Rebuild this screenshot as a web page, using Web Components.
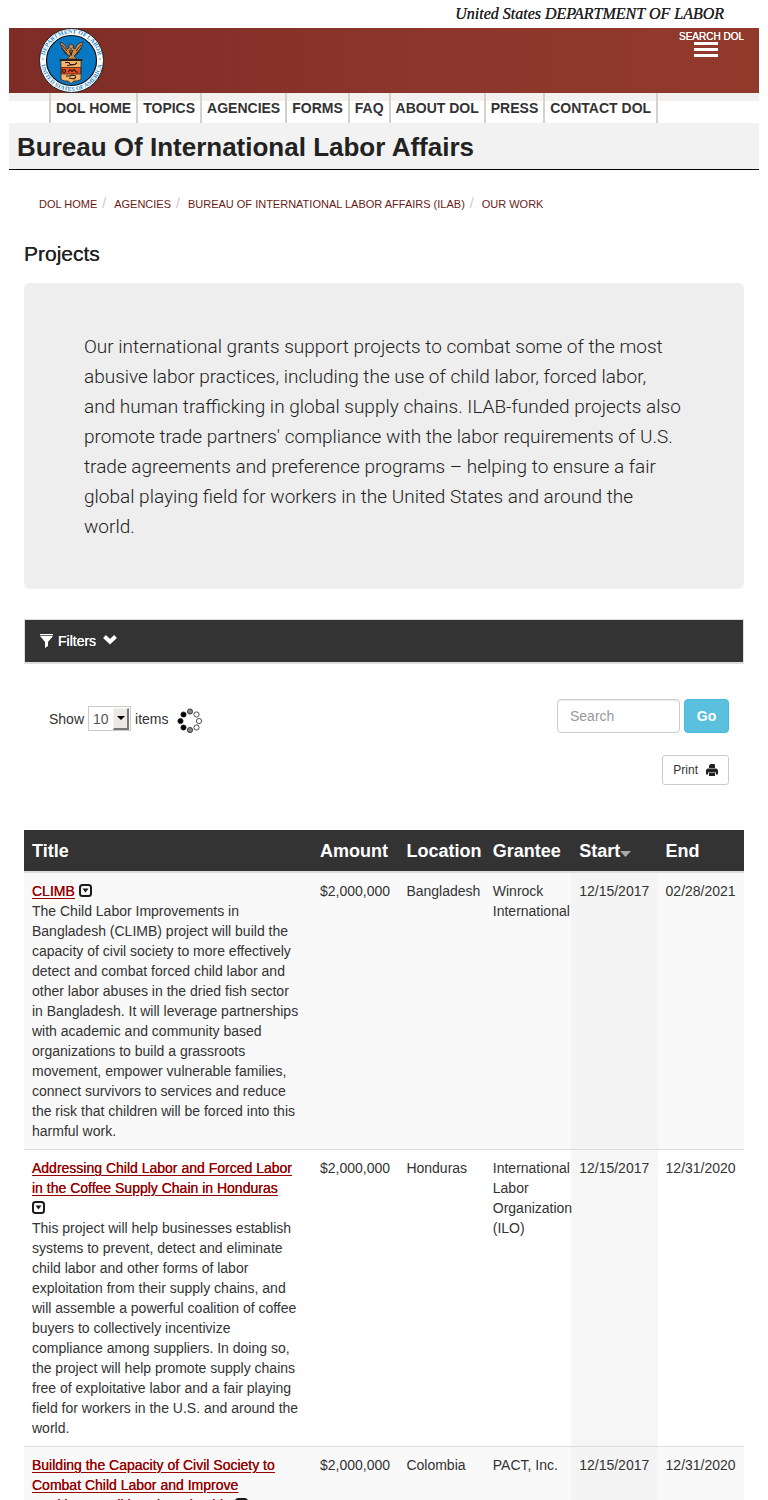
<!DOCTYPE html>
<html lang="en">
<head>
<meta charset="utf-8">
<meta name="viewport" content="width=device-width, initial-scale=1">
<title>Projects | Bureau of International Labor Affairs</title>
<style>
body { margin: 0; background: #fff; color: #333; font: 14px/20px "Liberation Sans", Arial, sans-serif; }
</style>
</head>
<body>
<dol-page>
  <dol-masthead slot="top"><span slot="agency">United States DEPARTMENT OF LABOR</span></dol-masthead>
  <dol-nav slot="top"></dol-nav>
  <bureau-title slot="top">Bureau Of International Labor Affairs</bureau-title>
  <crumb-trail></crumb-trail>
  <page-title>Projects</page-title>
  <lead-box>Our international grants support projects to combat some of the most abusive labor practices, including the use of child labor, forced labor, and&nbsp;human trafficking in global supply chains. ILAB-funded projects also promote trade partners' compliance with the labor requirements of U.S. trade agreements and preference programs – helping to ensure a fair global playing field for workers in the United States and around the world.</lead-box>
  <filter-bar>Filters</filter-bar>
  <list-controls></list-controls>
  <project-table></project-table>
</dol-page>

<script>
function define(name, html, setup) {
  const template = document.createElement('template');
  template.innerHTML = html;
  customElements.define(name, class extends HTMLElement {
    constructor() {
      super();
      const root = this.attachShadow({ mode: 'open' });
      root.append(template.content.cloneNode(true));
      if (setup) setup(root);
    }
  });
}

define('dol-page', `
<style>
:host { display: block; padding: 0 9px; }
main { padding: 0 15px; }
</style>
<header><slot name="top"></slot></header>
<main><slot></slot></main>`);

define('dol-seal', `
<style>:host { display: block; width: 65px; height: 65px; } svg { display: block; }</style>
<svg viewBox="0 0 65 65" width="65" height="65" role="img" aria-label="Department of Labor seal">
  <defs>
    <path id="upper" d="M5.500 32.500A27 27 0 0 1 59.500 32.500"/>
    <path id="lower" d="M2 32.500A30.500 30.500 0 0 0 63 32.500"/>
  </defs>
  <circle cx="32.500" cy="32.500" r="32" fill="#fff" stroke="#222" stroke-width="1"/>
  <circle cx="32.500" cy="32.500" r="25" fill="#0878c4" stroke="#111" stroke-width="1.200"/>
  <g font-family="Liberation Serif, serif" font-size="6" font-weight="bold" fill="#2788c9">
    <text><textPath href="#upper" startOffset="50%" text-anchor="middle">DEPARTMENT OF LABOR</textPath></text>
    <text><textPath href="#lower" startOffset="50%" text-anchor="middle">UNITED STATES OF AMERICA</textPath></text>
  </g>
  <circle cx="4" cy="31" r=".8" fill="#2788c9"/><circle cx="61" cy="31" r=".8" fill="#2788c9"/>
  <g stroke="#2a180c" stroke-width=".7" stroke-linejoin="round">
    <path d="M21 14q3 1 5 3l2 4 2-1 0-3 2-1 2.500 1.500-.5 2.500 2 1 2-4q2-2 6-3-1 3-1.500 5-2 4-4.500 7l-3 2 3 3h-10l3-3-3-1.500q-4-4-5-7-1-2-2-5.500z" fill="#c98b4e"/>
    <path d="M23 17l5 6M22.500 20l5 5M24.500 24l4 3M42 17l-5 6M42.500 20l-5 5M40 24l-4 3M32 20v8M30 22l2 5 2-5" fill="none" stroke-width=".9"/>
    <path d="M22 32.500h20v19q-4 2-7 1.500l-3 2.500-3-2.500q-4 .5-7-1.500z" fill="#f4b46c"/>
    <path d="M22.300 39.500h19.400v6.500H22.300z" fill="#e8502a"/>
    <path d="M20.500 32h23" fill="none" stroke-width="1.600"/>
  </g>
  <g fill="none" stroke="#2a180c" stroke-width="1.100">
    <path d="M26 34.500h4l1 2h5l2-2M28 37.500l8-1M25 41.500a1.500 1.500 0 1 0 .1 0M29 44l2-2.500 2 2 2-2 2 2.500h2M27 48h4l2-1 4 1M30 50l5 1 2-2"/>
  </g>
</svg>`);

define('dol-masthead', `
<style>
:host { display: block; }
.agency { display: flex; justify-content: flex-end; height: 28px; padding-right: 35px; box-sizing: border-box; font: italic 16px/28px "Liberation Serif", serif; color: #222; text-shadow: 0 0 0 currentColor; }
.band { display: flex; justify-content: space-between; align-items: flex-start; height: 65px; padding: 0 15px 0 30px; background: linear-gradient(90deg, #7e2c26, #8d372c 60%, #913a2c); }
button { display: flex; flex-direction: column; align-items: center; margin: 0; padding: 3px 0 0; border: 0; background: none; color: #fff; font: 10px/11px "Liberation Sans", Arial, sans-serif; text-shadow: 0 0 0 currentColor; cursor: pointer; }
.bars { width: 24px; height: 15px; margin-right: 10px; background: repeating-linear-gradient(#fff 0 3px, transparent 3px 6px); }
</style>
<div class="agency"><slot name="agency"></slot></div>
<div class="band">
  <dol-seal></dol-seal>
  <button type="button">SEARCH DOL<span class="bars"></span></button>
</div>`);

define('dol-nav', `
<style>
:host { display: block; background: linear-gradient(#f2f1ef 0 8px, #fff 8px); }
ul { display: flex; margin: 0; padding: 0 0 0 40px; list-style: none; height: 30px; }
li { border-right: 2px solid #d4d2cb; }
li:first-child { border-left: 2px solid #d4d2cb; }
a { display: block; padding: 5px; color: #333; font-weight: bold; text-decoration: none; white-space: nowrap; }
</style>
<nav><ul>
<li><a href="#">DOL HOME</a></li><li><a href="#">TOPICS</a></li><li><a href="#">AGENCIES</a></li><li><a href="#">FORMS</a></li><li><a href="#">FAQ</a></li><li><a href="#">ABOUT DOL</a></li><li><a href="#">PRESS</a></li><li><a href="#">CONTACT DOL</a></li>
</ul></nav>`);

define('bureau-title', `
<style>
:host { display: block; background: #f2f2f2; border-bottom: 1px solid #000; }
h1 { margin: 0; padding: 9px 8px 7px; color: #222; font-size: 26px; line-height: 30px; }
</style>
<h1><slot></slot></h1>`);

define('crumb-trail', `
<style>
:host { display: block; padding: 23px 15px 0; }
ol { display: flex; flex-wrap: wrap; margin: 0; padding: 0; list-style: none; }
li + li::before { content: "/"; padding: 0 8px 0 5px; color: #ccc; }
a { color: #6b1a14; font-size: 11px; text-decoration: none; }
</style>
<nav aria-label="Breadcrumb"><ol>
<li><a href="#">DOL HOME</a></li><li><a href="#">AGENCIES</a></li><li><a href="#">BUREAU OF INTERNATIONAL LABOR AFFAIRS (ILAB)</a></li><li><a href="#">OUR WORK</a></li>
</ol></nav>`);

define('page-title', `
<style>
:host { display: block; padding: 28px 0 17px; }
h2 { margin: 0; color: #222; font-size: 21px; line-height: 24px; font-weight: normal; text-shadow: 0 0 0 currentColor; }
</style>
<h2><slot></slot></h2>`);

define('lead-box', `
<style>
:host { display: block; padding: 49px 58px 47px 60px; border-radius: 6px; background: #eee; }
p { margin: 0; color: #222; font: 300 19px/30px Roboto, "Liberation Sans", sans-serif; }
</style>
<p><slot></slot></p>`);

define('filter-bar', `
<style>
:host { display: block; margin-top: 30px; }
button { display: flex; align-items: center; gap: 5px; width: 100%; height: 45px; padding: 0 15px; border: 1px solid #ddd; border-bottom-width: 2px; background: #333; color: #fff; font: 14px/20px "Liberation Sans", Arial, sans-serif; text-shadow: 0 0 0 currentColor; cursor: pointer; }
svg { display: block; }
</style>
<button type="button" aria-expanded="false">
  <svg width="13" height="15" viewBox="0 0 13 15" fill="#fff"><path d="M0 0h13v1.300H0zM0 2h13L8 8v4l-3 2V8z"/></svg>
  <slot></slot>
  <svg width="20" height="15" viewBox="0 0 20 15"><path d="M3.500 2.500l5.500 5.300 5.500-5.300" fill="none" stroke="#fff" stroke-width="4"/></svg>
</button>`);

define('busy-spinner', `
<style>:host { display: block; } svg { display: block; }</style>
<svg width="26" height="26" viewBox="0 0 26 26" stroke="#222" stroke-width=".8">
  <circle cx="13" cy="3.500" r="2.600" fill="#888"/><circle cx="19.500" cy="6.500" r="2.600" fill="#fff"/>
  <circle cx="22" cy="13" r="2.600" fill="#fff"/><circle cx="19.500" cy="19.500" r="2.600" fill="#fff"/>
  <circle cx="13" cy="22" r="2.600" fill="#888"/><circle cx="6.500" cy="19.500" r="2.600" fill="#000"/>
  <circle cx="3.500" cy="13" r="2.600" fill="#000"/><circle cx="6.500" cy="6.500" r="2.600" fill="#000"/>
</svg>`);

define('list-controls', `
<style>
:host { display: flex; justify-content: space-between; align-items: flex-start; padding: 35px 15px 45px 25px; }
.length { display: flex; align-items: center; gap: 4px; padding-top: 4px; }
.pick { display: grid; width: 43px; height: 25px; }
.pick > * { grid-area: 1 / 1; }
select { appearance: none; margin: 0; padding: 0 0 0 4px; border: 1px solid #ccc; border-radius: 0; background: #fff; color: #555; font: inherit; }
.arrow { justify-self: end; align-self: center; display: grid; place-items: center; width: 16px; height: 22px; margin-right: 2px; box-sizing: border-box; border: 1px solid #f5f3f0; border-right: 2px solid #777; border-bottom: 2px solid #777; background: #ece9e4; pointer-events: none; }
busy-spinner { margin: 5px 0 0 5px; }
.tools { display: flex; flex-direction: column; align-items: flex-end; gap: 22px; }
form { display: flex; gap: 4px; align-items: center; }
input { box-sizing: border-box; width: 123px; height: 34px; padding: 6px 12px; border: 1px solid #ccc; border-radius: 4px; background: #fff; box-shadow: inset 0 1px 1px #00000013; font: inherit; color: #555; }
input::placeholder { color: #999; opacity: 1; }
button { display: flex; align-items: center; justify-content: center; box-sizing: border-box; margin: 0; cursor: pointer; }
.go { width: 45px; height: 34px; border: 1px solid #46b8da; border-radius: 4px; background: #5bc0de; color: #fff; font: bold 14px/20px "Liberation Sans", Arial, sans-serif; }
.print { gap: 8px; height: 30px; padding: 0 10px; border: 1px solid #ccc; border-radius: 3px; background: #fff; color: #333; font: 12px/18px "Liberation Sans", Arial, sans-serif; }
</style>
<div class="length">
  <label for="len">Show</label>
  <span class="pick"><select id="len"><option>10</option><option>25</option><option>50</option></select>
    <span class="arrow"><svg width="8" height="4" viewBox="0 0 8 4"><path d="M0 0h8L4 4z"/></svg></span></span>
  <label for="len">items</label>
  <busy-spinner></busy-spinner>
</div>
<div class="tools">
  <form onsubmit="return false"><input type="search" placeholder="Search" aria-label="Search"><button class="go" type="submit">Go</button></form>
  <button class="print" type="button">Print
    <svg width="12" height="13" viewBox="0 0 12 13" fill="#222"><path d="M3 4V1.500L4.500 0h4L9 1.500V4zM1.500 4.500h9L12 6v4.500h-2V8.500H2v2H0V6zM3 9h6v3H3z"/></svg>
  </button>
</div>`);

define('toggle-icon', `
<style>:host { display: inline-block; width: 13px; height: 13px; margin-right: 8px; vertical-align: -1px; } svg { display: block; }</style>
<svg width="13" height="13" viewBox="0 0 13 13"><rect x="1" y="1" width="11" height="11" rx="2.500" fill="none" stroke="#1c1c1c" stroke-width="2"/><path d="M3.500 4.500h6l-3 4z" fill="#1c1c1c"/></svg>`);

const projects = [
  { title: 'CLIMB', amount: '$2,000,000', place: 'Bangladesh', grantee: 'Winrock International', start: '12/15/2017', end: '02/28/2021',
    text: 'The Child Labor Improvements in Bangladesh (CLIMB) project will build the capacity of civil society to more effectively detect and combat forced child labor and other labor abuses in the dried fish sector in Bangladesh. It will leverage partnerships with academic and community based organizations to build a grassroots movement, empower vulnerable families, connect survivors to services and reduce the risk that children will be forced into this harmful work.' },
  { title: 'Addressing Child Labor and Forced Labor in the Coffee Supply Chain in Honduras', amount: '$2,000,000', place: 'Honduras', grantee: 'International Labor Organization (ILO)', start: '12/15/2017', end: '12/31/2020',
    text: 'This project will help businesses establish systems to prevent, detect and eliminate child labor and other forms of labor exploitation from their supply chains, and will assemble a powerful coalition of coffee buyers to collectively incentivize compliance among suppliers. In doing so, the project will help promote supply chains free of exploitative labor and a fair playing field for workers in the U.S. and around the world.' },
  { title: 'Building the Capacity of Civil Society to Combat Child Labor and Improve Working&nbsp;Conditions in Colombia', amount: '$2,000,000', place: 'Colombia', grantee: 'PACT, Inc.', start: '12/15/2017', end: '12/31/2020', text: '' }
];

define('project-table', `
<style>
:host { display: block; }
table { width: 100%; table-layout: fixed; border-collapse: separate; border-spacing: 0; }
th, td { padding: 8px; text-align: left; vertical-align: top; }
th { padding: 9px 8px 7px; border-bottom: 2px solid #ddd; background: #333; color: #fff; font-size: 18px; line-height: 25px; white-space: nowrap; }
th:first-child { width: 40%; box-sizing: border-box; }
td { background: #fff; }
td:first-child { padding-right: 12px; }
tr:nth-child(odd) td { background: #f9f9f9; }
tr + tr td { border-top: 1px solid #ddd; }
tr td:nth-child(5) { background: #f6f6f6; }
tr:nth-child(odd) td:nth-child(5) { background: #f4f4f4; }
a { color: #900; text-decoration: underline; text-underline-offset: 2px; text-shadow: 0 0 0 currentColor; }
p { margin: 0; }
svg { display: inline-block; }
</style>
<table>
  <thead><tr><th>Title</th><th>Amount</th><th>Location</th><th>Grantee</th><th>Start<svg width="11" height="6" viewBox="0 0 11 6"><path d="M0 0h11L5.500 6z" fill="#aaa"/></svg></th><th>End</th></tr></thead>
  <tbody></tbody>
</table>`, root => {
  root.querySelector('tbody').innerHTML = projects.map(p =>
    `<tr><td><a href="#">${p.title}</a> <toggle-icon></toggle-icon><p>${p.text}</p></td><td>${p.amount}</td><td>${p.place}</td><td>${p.grantee}</td><td>${p.start}</td><td>${p.end}</td></tr>`).join('');
});
</script>
</body>
</html>
